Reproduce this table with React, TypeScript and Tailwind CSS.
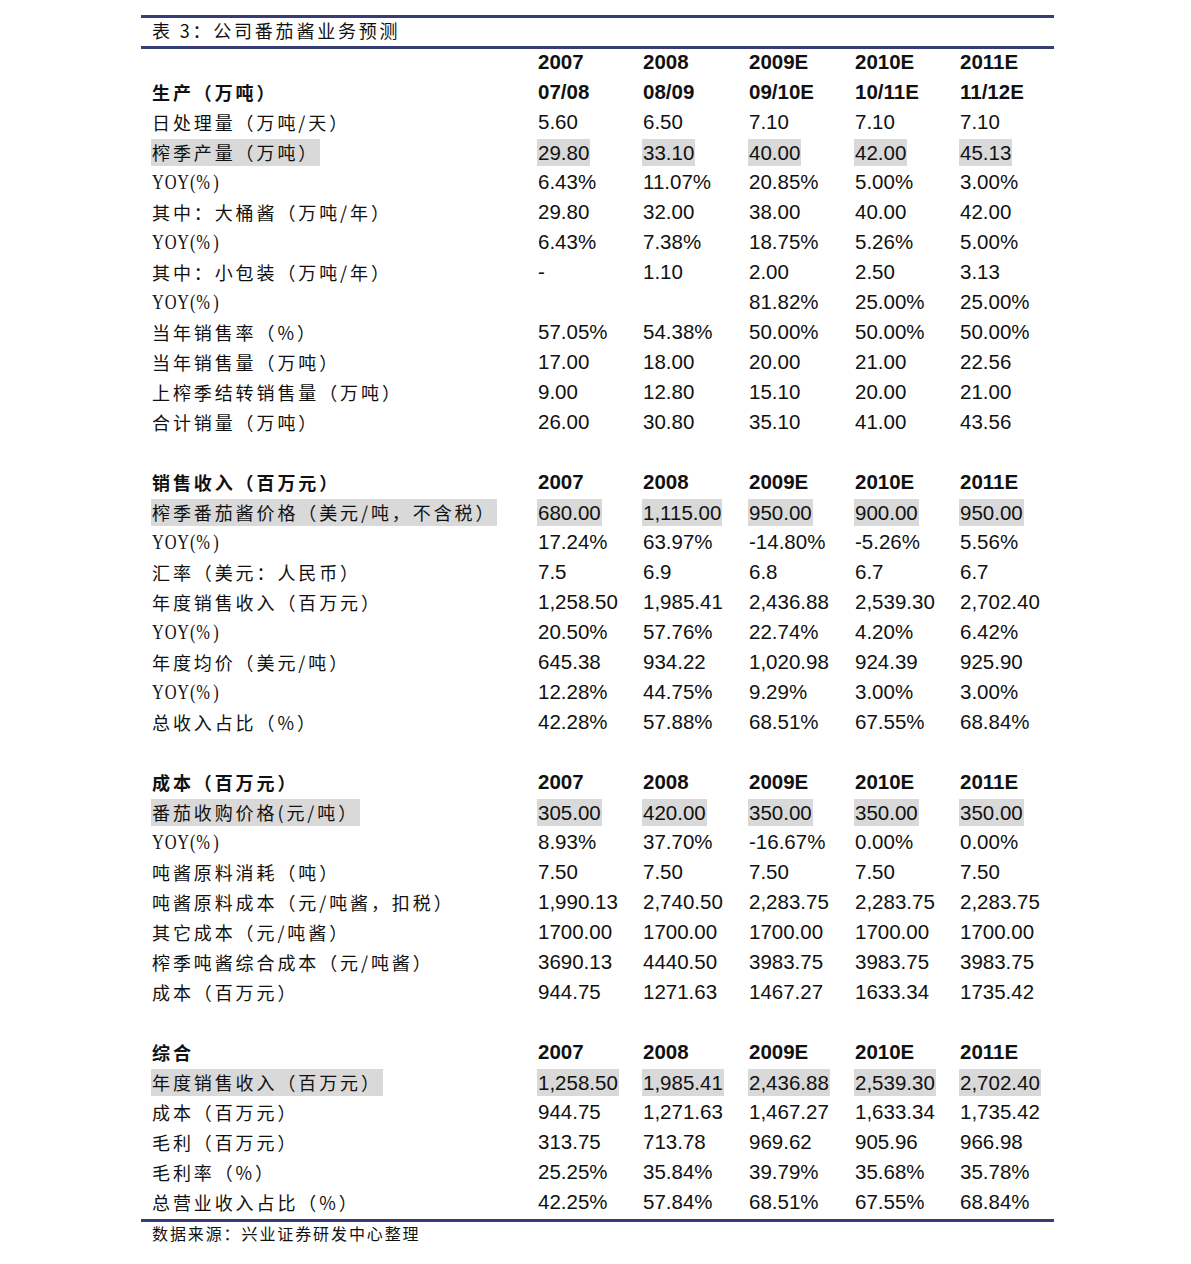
import React from "react";

type Row = {
  label: string;
  vals: string[];
  bold?: boolean;
  hl?: boolean;
  yoy?: boolean;
  blank?: boolean;
};

const years = ["2007", "2008", "2009E", "2010E", "2011E"];

const rows: Row[] = [
  { label: "", vals: years, bold: true },
  { label: "生产（万吨）", vals: ["07/08", "08/09", "09/10E", "10/11E", "11/12E"], bold: true },
  { label: "日处理量（万吨/天）", vals: ["5.60", "6.50", "7.10", "7.10", "7.10"] },
  { label: "榨季产量（万吨）", vals: ["29.80", "33.10", "40.00", "42.00", "45.13"], hl: true },
  { label: "YOY(%)", vals: ["6.43%", "11.07%", "20.85%", "5.00%", "3.00%"], yoy: true },
  { label: "其中：大桶酱（万吨/年）", vals: ["29.80", "32.00", "38.00", "40.00", "42.00"] },
  { label: "YOY(%)", vals: ["6.43%", "7.38%", "18.75%", "5.26%", "5.00%"], yoy: true },
  { label: "其中：小包装（万吨/年）", vals: ["-", "1.10", "2.00", "2.50", "3.13"] },
  { label: "YOY(%)", vals: ["", "", "81.82%", "25.00%", "25.00%"], yoy: true },
  { label: "当年销售率（%）", vals: ["57.05%", "54.38%", "50.00%", "50.00%", "50.00%"] },
  { label: "当年销售量（万吨）", vals: ["17.00", "18.00", "20.00", "21.00", "22.56"] },
  { label: "上榨季结转销售量（万吨）", vals: ["9.00", "12.80", "15.10", "20.00", "21.00"] },
  { label: "合计销量（万吨）", vals: ["26.00", "30.80", "35.10", "41.00", "43.56"] },
  { label: "", vals: [], blank: true },
  { label: "销售收入（百万元）", vals: years, bold: true },
  { label: "榨季番茄酱价格（美元/吨，不含税）", vals: ["680.00", "1,115.00", "950.00", "900.00", "950.00"], hl: true },
  { label: "YOY(%)", vals: ["17.24%", "63.97%", "-14.80%", "-5.26%", "5.56%"], yoy: true },
  { label: "汇率（美元：人民币）", vals: ["7.5", "6.9", "6.8", "6.7", "6.7"] },
  { label: "年度销售收入（百万元）", vals: ["1,258.50", "1,985.41", "2,436.88", "2,539.30", "2,702.40"] },
  { label: "YOY(%)", vals: ["20.50%", "57.76%", "22.74%", "4.20%", "6.42%"], yoy: true },
  { label: "年度均价（美元/吨）", vals: ["645.38", "934.22", "1,020.98", "924.39", "925.90"] },
  { label: "YOY(%)", vals: ["12.28%", "44.75%", "9.29%", "3.00%", "3.00%"], yoy: true },
  { label: "总收入占比（%）", vals: ["42.28%", "57.88%", "68.51%", "67.55%", "68.84%"] },
  { label: "", vals: [], blank: true },
  { label: "成本（百万元）", vals: years, bold: true },
  { label: "番茄收购价格(元/吨）", vals: ["305.00", "420.00", "350.00", "350.00", "350.00"], hl: true },
  { label: "YOY(%)", vals: ["8.93%", "37.70%", "-16.67%", "0.00%", "0.00%"], yoy: true },
  { label: "吨酱原料消耗（吨）", vals: ["7.50", "7.50", "7.50", "7.50", "7.50"] },
  { label: "吨酱原料成本（元/吨酱，扣税）", vals: ["1,990.13", "2,740.50", "2,283.75", "2,283.75", "2,283.75"] },
  { label: "其它成本（元/吨酱）", vals: ["1700.00", "1700.00", "1700.00", "1700.00", "1700.00"] },
  { label: "榨季吨酱综合成本（元/吨酱）", vals: ["3690.13", "4440.50", "3983.75", "3983.75", "3983.75"] },
  { label: "成本（百万元）", vals: ["944.75", "1271.63", "1467.27", "1633.34", "1735.42"] },
  { label: "", vals: [], blank: true },
  { label: "综合", vals: years, bold: true },
  { label: "年度销售收入（百万元）", vals: ["1,258.50", "1,985.41", "2,436.88", "2,539.30", "2,702.40"], hl: true },
  { label: "成本（百万元）", vals: ["944.75", "1,271.63", "1,467.27", "1,633.34", "1,735.42"] },
  { label: "毛利（百万元）", vals: ["313.75", "713.78", "969.62", "905.96", "966.98"] },
  { label: "毛利率（%）", vals: ["25.25%", "35.84%", "39.79%", "35.68%", "35.78%"] },
  { label: "总营业收入占比（%）", vals: ["42.25%", "57.84%", "68.51%", "67.55%", "68.84%"] },
];

const cjk = "font-['Noto_Sans_CJK_SC',sans-serif]";
const num = "font-['Liberation_Sans',Arial,sans-serif]";

function Label({ r }: { r: Row }) {
  if (r.yoy) {
    return (
      <span className="inline-block origin-left scale-x-[0.82] font-['Liberation_Serif',serif] text-[20px] text-[#111] tracking-[1px] leading-[30px]">
        YOY(%<span className="ml-[3px]">)</span>
      </span>
    );
  }
  const cls = `${cjk} text-[18px] tracking-[2.9px] text-[#111] ${r.bold ? "font-bold" : "font-normal"}`;
  if (r.hl) {
    return (
      <span className={`${cls} inline-block bg-[#d9d9d9] h-[27px] leading-[26px] pr-[1px] -ml-[1px] pl-[1px]`}>
        {r.label}
      </span>
    );
  }
  return <span className={cls}>{r.label}</span>;
}

export default function App() {
  return (
    <div className="w-[1191px] h-[1264px] bg-white pt-[15px] pl-[141px]">
      <div className="w-[913px]">
        <div className="border-t-[3px] border-b-[3px] border-[#383c7a] h-[34px] flex items-center pl-[11px] pb-[3px]">
          <span className={`${cjk} text-[18px] tracking-[2.8px] text-[#111]`}>表 3：公司番茄酱业务预测</span>
        </div>
        <div className="border-b-[3px] border-[#383c7a]">
          {rows.map((r, i) => (
            <div
              key={i}
              className="grid grid-cols-[397px_105px_106px_106px_105px_94px] h-[30px] items-center"
            >
              <div className="pl-[11px] flex items-center pb-[4px] h-[30px]">{!r.blank && <Label r={r} />}</div>
              {r.vals.map((v, j) => (
                <div key={j} className="flex items-center h-[30px] pb-[3px]">
                  {v !== "" && (
                    <span
                      className={`${num} text-[20.5px] text-[#111] ${r.bold ? "font-bold" : "font-normal"} ${
                        r.hl ? "inline-block bg-[#d9d9d9] h-[27px] leading-[27px] -ml-[1px] pl-[1px] pr-[1px]" : ""
                      }`}
                    >
                      {v}
                    </span>
                  )}
                </div>
              ))}
            </div>
          ))}
        </div>
        <div className="h-[24px] flex items-center pl-[11px] pb-[2px]">
          <span className={`${cjk} text-[16px] tracking-[1.9px] text-[#111]`}>数据来源：兴业证券研发中心整理</span>
        </div>
      </div>
    </div>
  );
}
